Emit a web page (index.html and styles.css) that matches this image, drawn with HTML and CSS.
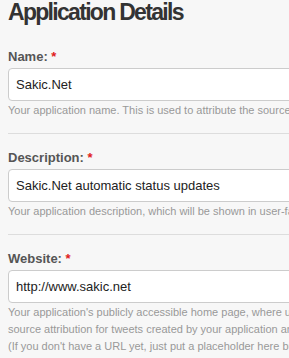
FILE: index.html
```html
<!DOCTYPE html>
<html>
<head>
<meta charset="utf-8">
<link rel="stylesheet" href="styles.css">
</head>
<body>
<div class="page">
  <h1 class="title">Application Details</h1>
  <div class="field">
    <label class="label">Name: <span class="req">*</span></label>
    <input class="input" type="text" value="Sakic.Net">
    <p class="help">Your application name. This is used to attribute the source of a tweet and in user-facing authorization screens. 32 characters max.</p>
  </div>
  <div class="field">
    <label class="label">Description: <span class="req">*</span></label>
    <input class="input" type="text" value="Sakic.Net automatic status updates">
    <p class="help">Your application description, which will be shown in user-facing authorization screens. Between 10 and 200 characters max.</p>
  </div>
  <div class="field last">
    <label class="label">Website: <span class="req">*</span></label>
    <input class="input" type="text" value="http://www.sakic.net">
    <p class="help">Your application's publicly accessible home page, where users can go to download, make use of, or find out more<br>source attribution for tweets created by your application and will be shown in user-facing authorization screens.<br>(If you don't have a URL yet, just put a placeholder here but remember to change it later.)</p>
  </div>
</div>
</body>
</html>
```
FILE: styles.css
```css
html, body {
  margin: 0;
  padding: 0;
  background: #f7f7f7;
  overflow: hidden;
}
.page {
  width: 600px;
  padding-left: 8px;
  font-family: "Liberation Sans", Arial, sans-serif;
}
.title {
  margin: 0;
  font-size: 23px;
  line-height: 24px;
  letter-spacing: -1.7px;
  font-weight: bold;
  color: #333;
}
.field {
  margin-top: 23px;
  padding-bottom: 14px;
  border-bottom: 1px solid #ddd;
}
.field + .field {
  margin-top: 14px;
}
.field.last {
  border-bottom: none;
}
.label {
  display: block;
  font-size: 13px;
  line-height: 20px;
  font-weight: bold;
  color: #555;
  margin-bottom: 1px;
}
.req {
  color: #e02020;
}
.input {
  display: block;
  box-sizing: border-box;
  width: 100%;
  height: 33px;
  margin: 0;
  padding: 0 7px;
  border: 1px solid #ccc;
  border-radius: 4px;
  background: #fff;
  font-family: "Liberation Sans", Arial, sans-serif;
  font-size: 13px;
  color: #222;
}
.help {
  margin: 1px 0 0;
  font-size: 11px;
  line-height: 17px;
  color: #999;
  white-space: nowrap;
}
```
